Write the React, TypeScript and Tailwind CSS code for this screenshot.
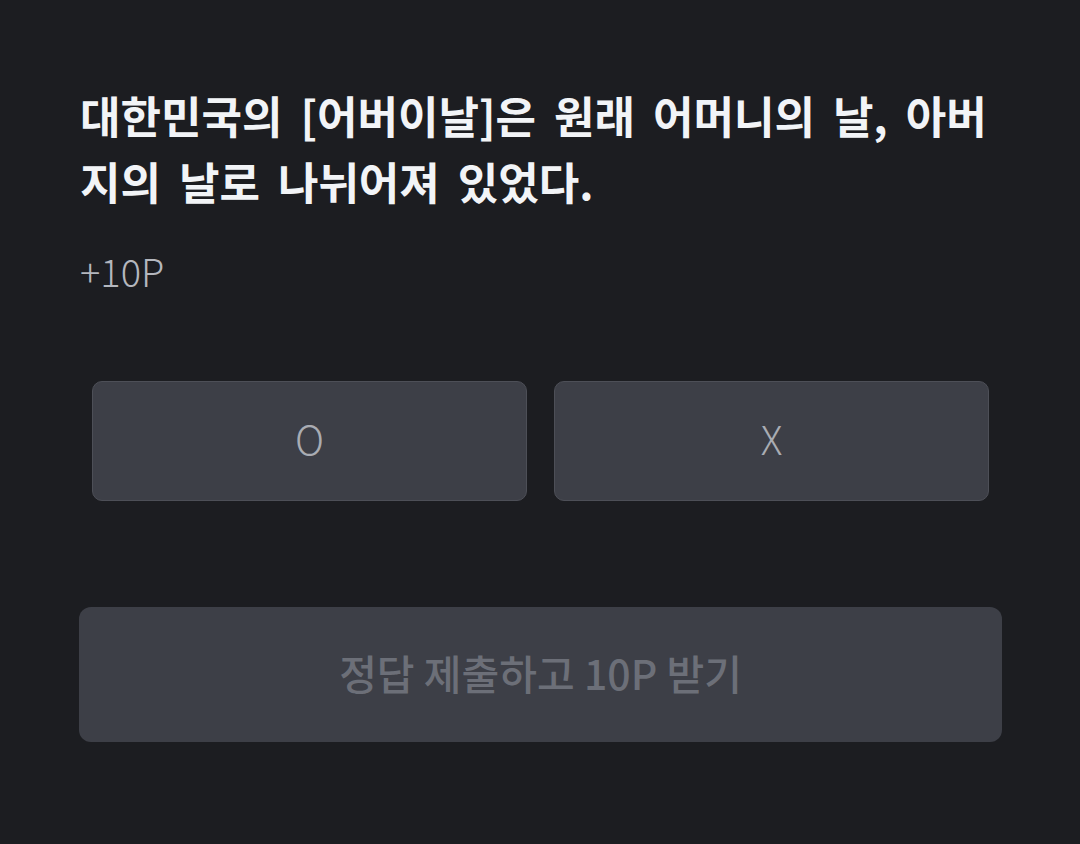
import React from 'react';

export default function App() {
  return (
    <div
      className="min-h-[844px] w-full bg-[#1c1d21] pl-[79px] pr-[78px] pt-[82px]"
      style={{ fontFamily: '"Noto Sans CJK KR", "Noto Sans", sans-serif' }}
    >
      <h1 className="pl-px text-[44px] font-bold leading-[66px] text-[#f2f4f7] [word-spacing:8px]">
        대한민국의 [어버이날]은 원래 어머니의 날, 아버지의 날로 나뉘어져 있었다.
      </h1>
      <p className="mt-[32px] pl-px text-[38px] font-light leading-[50px] text-[#b4b7be]">+10P</p>

      <div className="mt-[85px] grid grid-cols-2 gap-[27px] px-[13px]">
        <button className="flex h-[120px] items-center justify-center rounded-[10px] border border-[#4d4f57] bg-[#3d3f47] pb-[6px] text-[40px] font-light text-[#a9acb3]">
          O
        </button>
        <button className="flex h-[120px] items-center justify-center rounded-[10px] border border-[#4d4f57] bg-[#3d3f47] pb-[6px] text-[40px] font-light text-[#a9acb3]">
          X
        </button>
      </div>

      <button className="mt-[106px] flex h-[135px] w-full items-center justify-center rounded-[12px] bg-[#3d3f47] pb-[4px] text-[41px] font-medium text-[#6c6f78]">
        정답 제출하고 10P 받기
      </button>
    </div>
  );
}
